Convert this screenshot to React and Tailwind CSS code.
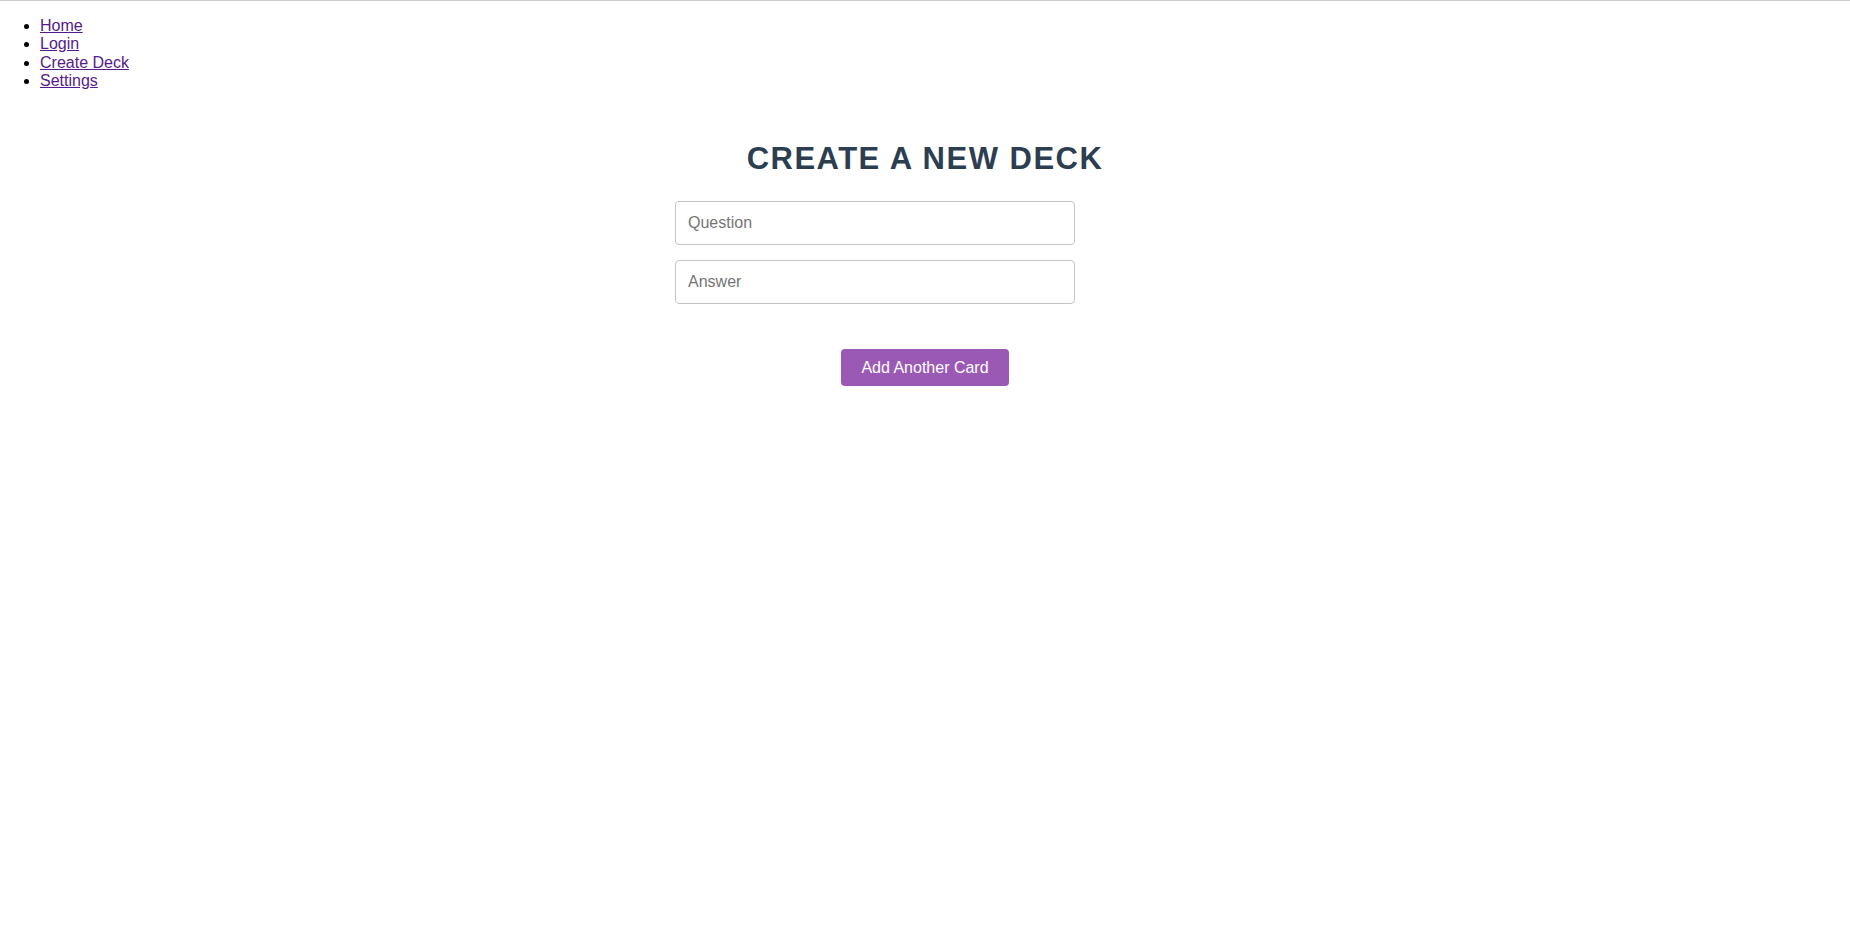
export default function App() {
  const links = ['Home', 'Login', 'Create Deck', 'Settings'];

  return (
    <div className="min-h-[933px] bg-white border-t border-[#cccccc] text-black text-base" style={{ fontFamily: '"Liberation Sans", Arial, sans-serif' }}>
      {/* nav */}
      <ul className="list-disc pl-10 mt-4 leading-[18.4px]">
        {links.map((l) => (
          <li key={l}>
            <a href="#" className="text-[#551a8b] underline">{l}</a>
          </li>
        ))}
      </ul>

      {/* deck form */}
      <div className="w-[500px] mx-auto mt-[50px]">
        <h1 className="text-center text-[31px] leading-[35px] font-bold tracking-[1.5px] text-[#2c3e50]">
          CREATE A NEW DECK
        </h1>
        <div className="flex flex-col gap-[15px] mt-[25.5px]">
          <input
            type="text"
            placeholder="Question"
            className="w-[400px] h-11 px-3 border border-[#c4c4c4] rounded text-base placeholder:text-[#757575] outline-none"
          />
          <input
            type="text"
            placeholder="Answer"
            className="w-[400px] h-11 px-3 border border-[#c4c4c4] rounded text-base placeholder:text-[#757575] outline-none"
          />
        </div>
        <div className="flex justify-center mt-[45px]">
          <button className="h-[37px] px-5 bg-[#9b59b6] text-white text-base rounded">
            Add Another Card
          </button>
        </div>
      </div>
    </div>
  );
}
